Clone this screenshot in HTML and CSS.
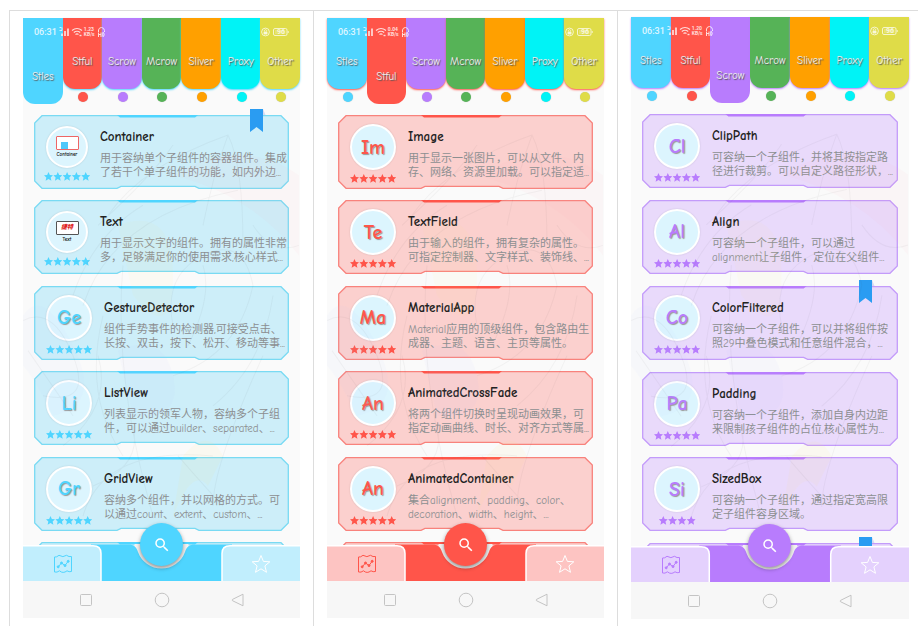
FILE: index.html
```html
<!DOCTYPE html>
<html lang="zh">
<head>
<meta charset="utf-8">
<title>Flutter Widgets</title>
<link rel="stylesheet" href="styles.css">
</head>
<body>
<svg class="defs" aria-hidden="true">
  <symbol id="frame" viewBox="0 0 255 74" preserveAspectRatio="none">
    <path class="frame-body" d="M8 .7H247L254.3 8V66L247 73.3H165L161 71.3H87L83 73.3H8L.7 66V8Z"/>
    <path class="frame-tab" d="M83 0H164L161 2.5H86Z"/>
  </symbol>
  <symbol id="star" viewBox="0 0 10 10"><path d="M5 0 6.500 3.300 10 3.700 7.400 6.100 8.200 9.700 5 7.900 1.800 9.700 2.600 6.100 0 3.700 3.500 3.300Z"/></symbol>
  <symbol id="stars5" viewBox="0 0 46 9">
    <use href="#star" x="0" width="9" height="9"/><use href="#star" x="9.3" width="9" height="9"/><use href="#star" x="18.6" width="9" height="9"/><use href="#star" x="27.9" width="9" height="9"/><use href="#star" x="37.2" width="9" height="9"/>
  </symbol>
  <symbol id="stars4" viewBox="0 0 46 9">
    <use href="#star" x="4.8" width="9" height="9"/><use href="#star" x="14.1" width="9" height="9"/><use href="#star" x="23.4" width="9" height="9"/><use href="#star" x="32.7" width="9" height="9"/>
  </symbol>
  <symbol id="bookmark" viewBox="0 0 16 24">
    <path d="M13 0 15.5 6H13Z" fill="#d5d9f3"/><path d="M0 0H13V23L6.5 18 0 23Z" fill="#2a9cf2"/>
  </symbol>
  <symbol id="status" viewBox="0 0 46 12">
    <g fill="none" stroke="#fff" stroke-width="1">
      <path d="M.5 1.500h2M.5 4.500H3M3 1.500V4.500" stroke-width=".9"/>
      <path d="M3 10V7.500M6 10V5M9 10V2.500" stroke-width="1.700"/>
      <path d="M13 4.500Q18 .5 23 4.500M14.800 6.500Q18 4 21.200 6.500M16.500 8.400Q18 7.300 19.500 8.400" stroke-width="1.200"/>
      <path d="M20.500 9.500h2" stroke-width="1.400"/>
      <path d="M39.500 6V4Q40 1.500 42.500 1.500T45.500 4.500V6M39.500 6.500V11M42 6.500V11M39.500 8.500H42M43.800 6.500V10.500H44.500Q46 8.500 44.500 6.500Z"/>
    </g>
  </symbol>
  <symbol id="lock" viewBox="0 0 28 10">
    <g fill="none" stroke="#fff" stroke-width=".9">
      <circle cx="4.500" cy="5" r="3.900"/><path d="M3.200 4.500V3.500Q4.500 1.800 5.800 3.500V4.500"/><path d="M3 5H6V7H3Z" fill="#fff"/>
      <rect x="12.500" y="1.500" width="13.500" height="7" rx="1.500"/><path d="M27.200 4V6"/>
    </g>
    <rect x="14" y="2.800" width="10.500" height="4.400" fill="#fff" opacity=".3"/>
  </symbol>
  <symbol id="bar" viewBox="0 0 277 37" preserveAspectRatio="none">
    <circle class="bar-notch" cx="138.500" cy="0" r="27"/>
    <path class="bar-solid" d="M68 .5H105C111 .5 113.500 3 115 8A25 25 0 0 0 162 8C163.500 3 166 .5 172 .5H209V37H68Z"/>
    <path class="bar-side" d="M-2 1.800H70Q78 1.800 78 9.500V40H-2Z"/>
    <path class="bar-side" d="M279 1.800H207Q199 1.800 199 9.500V40H279Z"/>
  </symbol>
  <symbol id="map" viewBox="0 0 20 20">
    <path d="M1.500 3Q3.500 3.500 6 1.300Q10 4 13.500 1.300Q16 3.200 18.500 2.500V17.500Q16 18.200 14 16.800Q10 20 6.500 16.800Q4 18.800 1.500 18Z"/>
    <path d="M5.500 12.500 8.500 9 12 11.500 15 7.500"/>
    <g fill="currentColor"><circle cx="5.200" cy="12.800" r="1"/><circle cx="8.500" cy="9" r="1"/><circle cx="12" cy="11.600" r="1"/><circle cx="15.200" cy="7.300" r="1"/></g>
  </symbol>
  <symbol id="fav" viewBox="0 0 20 20"><path d="M10 1.500 12.400 7.400 18.800 7.800 13.900 11.900 15.500 18.300 10 14.800 4.500 18.300 6.100 11.900 1.200 7.800 7.600 7.400Z"/></symbol>
  <symbol id="search" viewBox="0 0 24 24"><path d="M15.500 14h-.79l-.28-.27A6.470 6.470 0 0 0 16 9.500 6.500 6.500 0 1 0 9.500 16c1.610 0 3.090-.59 4.230-1.570l.27.28v.79l5 4.990L20.490 19l-4.990-5zm-6 0C7.010 14 5 11.990 5 9.500S7.010 5 9.500 5 14 7.010 14 9.500 11.990 14 9.500 14z"/></symbol>
  <symbol id="recents" viewBox="0 0 16 16"><rect x="2.500" y="2.500" width="11" height="11" rx="1"/></symbol>
  <symbol id="home" viewBox="0 0 16 16"><circle cx="8" cy="8" r="6.800"/></symbol>
  <symbol id="back" viewBox="0 0 16 16"><path d="M13 2.200V13.800L2.500 8.700Q1.800 8 2.500 7.400Z" stroke-linejoin="round"/></symbol>
  <symbol id="sketch" viewBox="0 0 277 430" preserveAspectRatio="none">
    <g stroke="none">
      <path d="M150 60Q220 20 276 60V140Q230 80 150 60Z" fill="#f7a8b4" opacity=".06"/>
      <path d="M0 200Q20 170 50 230T30 300Q10 260 0 250Z" fill="#b5c5ff" opacity=".06"/>
      <path d="M95 110Q150 90 150 160T110 180Z" fill="#ffe96e" opacity=".05"/>
      <path d="M95 235Q140 215 150 260T110 300Z" fill="#b9b8ff" opacity=".06"/>
      <path d="M160 340Q185 310 200 340L185 370Q170 350 150 400Z" fill="#ffe96e" opacity=".07"/>
    </g>
    <path opacity=".05" d="M75 110Q130 60 150 30M85 100Q120 50 205 20Q220 50 220 130M205 20Q190 60 180 110M50 180Q70 120 120 90M60 190Q90 100 215 75M150 210Q140 160 180 140T230 170Q215 240 150 260M165 230Q190 180 180 150M250 180Q240 250 190 290M0 205Q30 190 50 240T20 280M5 235L50 300M80 200Q60 280 100 340M100 150Q90 260 130 400M60 400Q80 330 190 340M190 390Q190 350 240 240M200 390Q190 380 155 340M70 370Q120 350 110 310M230 110Q250 140 276 130M40 330Q90 290 75 240"/>
  </symbol>
</svg>
<main class="board">

<div class="cell"><section class="phone blue">
  <header class="tabs">
    <button class="tab t-blue active">Stles</button><button class="tab t-red">Stful</button><button class="tab t-purple">Scrow</button><button class="tab t-green">Mcrow</button><button class="tab t-orange">Sliver</button><button class="tab t-cyan">Proxy</button><button class="tab t-yellow">Other</button>
    <div class="status"><span class="time">06:31</span><svg class="signals"><use href="#status"/></svg><span class="speed">1.23<br>KB/s</span><span class="charge"><svg><use href="#lock"/></svg><b>96</b></span></div>
  </header>
  <div class="list">
    <svg class="backdrop"><use href="#sketch"/></svg>
    <article class="card pictured"><svg class="frame"><use href="#frame"/></svg><div class="mark"><div class="avatar"><span class="thumb red-edge"><i></i></span><small>Container</small></div><svg class="stars"><use href="#stars5"/></svg></div><div class="info"><h2>Container</h2><p>用于容纳单个子组件的容器组件。集成<br>了若干个单子组件的功能，如内外边...</p></div><svg class="bookmark"><use href="#bookmark"/></svg></article>
    <article class="card pictured"><svg class="frame"><use href="#frame"/></svg><div class="mark"><div class="avatar"><span class="thumb"><em>捷特</em></span><small>Text</small></div><svg class="stars"><use href="#stars5"/></svg></div><div class="info"><h2>Text</h2><p>用于显示文字的组件。拥有的属性非常<br>多，足够满足你的使用需求,核心样式...</p></div></article>
    <article class="card"><svg class="frame"><use href="#frame"/></svg><div class="mark"><div class="avatar">Ge</div><svg class="stars"><use href="#stars5"/></svg></div><div class="info"><h2>GestureDetector</h2><p>组件手势事件的检测器,可接受点击、<br>长按、双击，按下、松开、移动等事...</p></div></article>
    <article class="card"><svg class="frame"><use href="#frame"/></svg><div class="mark"><div class="avatar">Li</div><svg class="stars"><use href="#stars5"/></svg></div><div class="info"><h2>ListView</h2><p>列表显示的领军人物，容纳多个子组<br>件，可以通过builder、separated、...</p></div></article>
    <article class="card"><svg class="frame"><use href="#frame"/></svg><div class="mark"><div class="avatar">Gr</div><svg class="stars"><use href="#stars5"/></svg></div><div class="info"><h2>GridView</h2><p>容纳多个组件，并以网格的方式。可<br>以通过count、extent、custom、...</p></div></article>
    <div class="peek"><svg class="frame"><use href="#frame"/></svg></div>
  </div>
  <nav class="bar"><svg class="bar-bg"><use href="#bar"/></svg><button class="map" aria-label="Map"><svg><use href="#map"/></svg></button><button class="fab" aria-label="Search"><svg><use href="#search"/></svg></button><button class="fav" aria-label="Favourites"><svg><use href="#fav"/></svg></button></nav>
  <footer class="system"><svg><use href="#recents"/></svg><svg><use href="#home"/></svg><svg><use href="#back"/></svg></footer>
</section></div>

<div class="cell"><section class="phone red">
  <header class="tabs">
    <button class="tab t-blue">Stles</button><button class="tab t-red active">Stful</button><button class="tab t-purple">Scrow</button><button class="tab t-green">Mcrow</button><button class="tab t-orange">Sliver</button><button class="tab t-cyan">Proxy</button><button class="tab t-yellow">Other</button>
    <div class="status"><span class="time">06:31</span><svg class="signals"><use href="#status"/></svg><span class="speed">0.04<br>KB/s</span><span class="charge"><svg><use href="#lock"/></svg><b>96</b></span></div>
  </header>
  <div class="list">
    <svg class="backdrop"><use href="#sketch"/></svg>
    <article class="card"><svg class="frame"><use href="#frame"/></svg><div class="mark"><div class="avatar">Im</div><svg class="stars"><use href="#stars5"/></svg></div><div class="info"><h2>Image</h2><p>用于显示一张图片，可以从文件、内<br>存、网络、资源里加载。可以指定适...</p></div></article>
    <article class="card"><svg class="frame"><use href="#frame"/></svg><div class="mark"><div class="avatar">Te</div><svg class="stars"><use href="#stars5"/></svg></div><div class="info"><h2>TextField</h2><p>由于输入的组件，拥有复杂的属性。<br>可指定控制器、文字样式、装饰线、...</p></div></article>
    <article class="card"><svg class="frame"><use href="#frame"/></svg><div class="mark"><div class="avatar">Ma</div><svg class="stars"><use href="#stars5"/></svg></div><div class="info"><h2>MaterialApp</h2><p>Material应用的顶级组件，包含路由生<br>成器、主题、语言、主页等属性。</p></div></article>
    <article class="card"><svg class="frame"><use href="#frame"/></svg><div class="mark"><div class="avatar">An</div><svg class="stars"><use href="#stars5"/></svg></div><div class="info"><h2>AnimatedCrossFade</h2><p>将两个组件切换时呈现动画效果，可<br>指定动画曲线、时长、对齐方式等属...</p></div></article>
    <article class="card"><svg class="frame"><use href="#frame"/></svg><div class="mark"><div class="avatar">An</div><svg class="stars"><use href="#stars5"/></svg></div><div class="info"><h2>AnimatedContainer</h2><p>集合alignment、padding、color、<br>decoration、width、height、...</p></div></article>
    <div class="peek"><svg class="frame"><use href="#frame"/></svg></div>
  </div>
  <nav class="bar"><svg class="bar-bg"><use href="#bar"/></svg><button class="map" aria-label="Map"><svg><use href="#map"/></svg></button><button class="fab" aria-label="Search"><svg><use href="#search"/></svg></button><button class="fav" aria-label="Favourites"><svg><use href="#fav"/></svg></button></nav>
  <footer class="system"><svg><use href="#recents"/></svg><svg><use href="#home"/></svg><svg><use href="#back"/></svg></footer>
</section></div>

<div class="cell"><section class="phone purple">
  <header class="tabs">
    <button class="tab t-blue">Stles</button><button class="tab t-red">Stful</button><button class="tab t-purple active">Scrow</button><button class="tab t-green">Mcrow</button><button class="tab t-orange">Sliver</button><button class="tab t-cyan">Proxy</button><button class="tab t-yellow">Other</button>
    <div class="status"><span class="time">06:31</span><svg class="signals"><use href="#status"/></svg><span class="speed">1.20<br>KB/s</span><span class="charge"><svg><use href="#lock"/></svg><b>96</b></span></div>
  </header>
  <div class="list">
    <svg class="backdrop"><use href="#sketch"/></svg>
    <article class="card"><svg class="frame"><use href="#frame"/></svg><div class="mark"><div class="avatar">Cl</div><svg class="stars"><use href="#stars5"/></svg></div><div class="info"><h2>ClipPath</h2><p>可容纳一个子组件，并将其按指定路<br>径进行裁剪。可以自定义路径形状，...</p></div></article>
    <article class="card"><svg class="frame"><use href="#frame"/></svg><div class="mark"><div class="avatar">Al</div><svg class="stars"><use href="#stars5"/></svg></div><div class="info"><h2>Align</h2><p>可容纳一个子组件，可以通过<br>alignment让子组件，定位在父组件...</p></div></article>
    <article class="card"><svg class="frame"><use href="#frame"/></svg><div class="mark"><div class="avatar">Co</div><svg class="stars"><use href="#stars5"/></svg></div><div class="info"><h2>ColorFiltered</h2><p>可容纳一个子组件，可以并将组件按<br>照29中叠色模式和任意组件混合，...</p></div><svg class="bookmark"><use href="#bookmark"/></svg></article>
    <article class="card"><svg class="frame"><use href="#frame"/></svg><div class="mark"><div class="avatar">Pa</div><svg class="stars"><use href="#stars5"/></svg></div><div class="info"><h2>Padding</h2><p>可容纳一个子组件，添加自身内边距<br>来限制孩子组件的占位,核心属性为...</p></div></article>
    <article class="card"><svg class="frame"><use href="#frame"/></svg><div class="mark"><div class="avatar">Si</div><svg class="stars"><use href="#stars4"/></svg></div><div class="info"><h2>SizedBox</h2><p>可容纳一个子组件，通过指定宽高限<br>定子组件容身区域。</p></div></article>
    <div class="peek"><svg class="frame"><use href="#frame"/></svg><svg class="bookmark"><use href="#bookmark"/></svg></div>
  </div>
  <nav class="bar"><svg class="bar-bg"><use href="#bar"/></svg><button class="map" aria-label="Map"><svg><use href="#map"/></svg></button><button class="fab" aria-label="Search"><svg><use href="#search"/></svg></button><button class="fav" aria-label="Favourites"><svg><use href="#fav"/></svg></button></nav>
  <footer class="system"><svg><use href="#recents"/></svg><svg><use href="#home"/></svg><svg><use href="#back"/></svg></footer>
</section></div>

</main>
</body>
</html>
```
FILE: styles.css
```css
* { box-sizing: border-box; margin: 0; padding: 0; }
body {
  background: #fff;
  overflow: hidden;
  font-family: "Comic Neue", "Noto Sans CJK SC", sans-serif;
}
button { border: 0; background: none; font-family: inherit; cursor: pointer; }
svg { display: block; }
.defs { position: absolute; width: 0; height: 0; }

.board {
  display: grid;
  grid-template-columns: 304fr 304fr 301fr;
  min-height: 100vh;
  padding: 10px 0 0 9px;
}
.cell {
  padding: 7px 13px 0;
  border-top: 1px solid #ddd;
  border-left: 1px solid #ddd;
}
.cell:last-child { padding: 6px 9px 0 13px; }

.blue { --theme: #4fd5ff; --card: #cdeef9; --edge: #79daf3; --side: #c1eefd; }
.red { --theme: #ff554a; --card: #fbd0ce; --edge: #f8827c; --side: #fdc4c2; }
.purple { --theme: #b87cfd; --card: #e9dafb; --edge: #c39bfa; --side: #e4d1fd; }

.phone {
  display: grid;
  grid-template-rows: 97px 1fr 35px 37px;
  aspect-ratio: 6 / 13;
  background: #fafafa;
}

.tabs {
  position: relative;
  display: grid;
  grid-template-columns: repeat(7, 1fr);
  align-items: start;
}
.tab {
  position: relative;
  height: 71px;
  padding-top: 16px;
  border-radius: 0 0 12px 12px;
  background: var(--tab);
  box-shadow: 0 1px 2px var(--theme);
  color: #eee;
  font-size: 11px;
  line-height: 16px;
  text-shadow: 1px 1px 1px #555;
}
.tab::after {
  content: "";
  position: absolute;
  top: 74px;
  left: calc(50% - 4px);
  width: 10px;
  height: 10px;
  border-radius: 50%;
  background: var(--tab);
  box-shadow: 0 0 1px #0004;
}
.tab.active { height: 86px; padding-top: 32px; box-shadow: none; }
.tab.active::after { display: none; }
.t-blue { --tab: #4fd5ff; }
.t-red { --tab: #ff554a; }
.t-purple { --tab: #b87cfd; }
.t-green { --tab: #56b357; }
.t-orange { --tab: #ffa000; }
.t-cyan { --tab: #00f3f6; }
.t-yellow { --tab: #dfdc48; }

.status {
  position: absolute;
  inset: 8px 11px auto;
  display: flex;
  align-items: center;
  height: 12px;
  color: #fff;
  font-family: Roboto, sans-serif;
  opacity: .8;
}
.time { font-size: 9px; font-weight: 500; }
.signals { width: 46px; height: 12px; margin-left: 2px; }
.speed { width: 12px; margin-left: -21px; font-size: 5px; font-weight: 700; line-height: 5px; }
.charge { position: relative; margin-left: auto; }
.charge svg { width: 28px; height: 10px; }
.charge b { position: absolute; right: 4px; top: 1px; font-size: 7px; line-height: 8px; }

.list {
  position: relative;
  display: grid;
  grid-template-rows: repeat(5, 1fr) 4px;
  padding: 0 11px;
}
.backdrop {
  position: absolute;
  inset: 0;
  z-index: 1;
  width: 100%;
  height: 100%;
  fill: none;
  stroke: #555;
  stroke-width: 1;
  pointer-events: none;
}
.card {
  position: relative;
  display: flex;
  gap: 12px;
  height: 74px;
  padding: 9px 0 0 12px;
}
.pictured { padding-top: 11px; }
.frame { position: absolute; inset: 0; width: 100%; height: 74px; }
.frame-body { fill: var(--card); stroke: var(--edge); stroke-width: 1.3; }
.frame-tab { fill: var(--theme); }
.mark {
  position: relative;
  display: flex;
  flex-direction: column;
  align-items: center;
  gap: 4px;
  width: 46px;
}
.avatar {
  display: flex;
  flex: none;
  flex-direction: column;
  align-items: center;
  justify-content: center;
  width: 46px;
  height: 46px;
  border: 2px solid #fff;
  border-radius: 50%;
  background: #dcf5fe;
  box-shadow: 0 0 2px #0002;
  color: var(--theme);
  font-size: 20px;
  font-weight: 700;
  text-shadow: 1px 1px 1px #999;
}
.pictured .mark, .pictured .avatar { width: 42px; }
.pictured .avatar { height: 42px; text-shadow: none; }
.thumb {
  display: flex;
  align-items: center;
  justify-content: center;
  width: 23px;
  height: 14px;
  border: 1px solid #555;
  border-radius: 1px;
  background: #fff;
}
.thumb.red-edge { justify-content: flex-start; padding: 4px 0 0 4px; border-color: #e66; }
.thumb i { width: 7px; height: 7px; background: #4fc8fa; }
.thumb em { color: #e02020; font-size: 6px; line-height: 8px; font-weight: 900; }
.avatar small { color: #111; font-size: 5px; line-height: 8px; }
.stars { flex: none; width: 46px; height: 9px; fill: var(--theme); }
.info { position: relative; padding-top: 4px; white-space: nowrap; }
.pictured .info { padding-top: 2px; }
h2 { color: #222; font-size: 13px; line-height: 18px; font-weight: 700; }
.info p {
  margin-top: 6px;
  color: #8c8f91;
  font-size: 11px;
  line-height: 14px;
}
.bookmark { position: absolute; top: -6px; right: 23px; width: 16px; height: 24px; }
.peek { position: relative; height: 9px; margin-bottom: -5px; clip-path: inset(-8px 0 0); }

.bar {
  position: relative;
  z-index: 2;
  display: grid;
  grid-template-columns: 78fr 121fr 78fr;
  place-items: center;
}
.bar-bg { position: absolute; inset: -2px 0 0; width: 100%; height: 37px; }
.bar-notch { fill: #f3f3f3; }
.bar-solid { fill: var(--theme); }
.bar-side { fill: var(--side); stroke: #fff; stroke-width: 1.5; }
.bar button { position: relative; }
.map svg, .fav svg { width: 20px; height: 20px; fill: none; }
.map { color: var(--theme); padding-left: 2px; }
.map svg { stroke: var(--theme); stroke-width: 1; }
.fav svg { stroke: #fff; stroke-width: 1; }
.bar .fab {
  display: grid;
  place-items: center;
  width: 43px;
  height: 43px;
  margin-top: -38px;
  border-radius: 50%;
  background: var(--theme);
  box-shadow: 0 2px 4px #0006;
}
.fab svg { width: 18px; height: 18px; fill: #fff; }

.system {
  display: flex;
  align-items: center;
  justify-content: center;
  gap: 60px;
  background: #f7f7f7;
}
.system svg { width: 16px; height: 16px; fill: none; stroke: #c4c4c4; stroke-width: 1; }
```
